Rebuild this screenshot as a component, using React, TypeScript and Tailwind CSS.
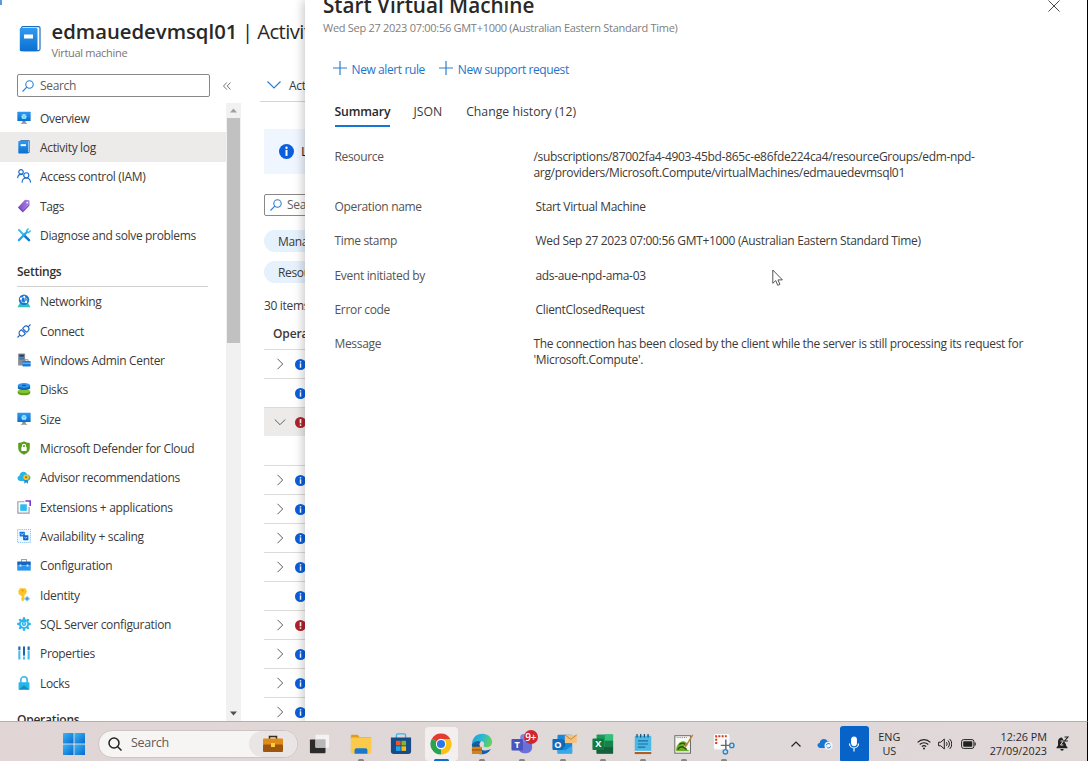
import React from "react";

type IconName =
  | "vm" | "log" | "iam" | "tag" | "tools" | "network" | "plug" | "admin" | "disks" | "shield"
  | "advisor" | "extensions" | "scaling" | "toolbox" | "key" | "gear" | "props" | "lock";

const iconArt: Record<IconName, React.ReactNode> = {
  vm: (
    <>
      <rect x="0.4" y="0.8" width="15.2" height="10.7" rx="0.6" fill="url(#gBlue)" />
      <circle cx="8" cy="6.2" r="2.9" fill="#9fe8fb" />
      <path d="M8 6.200V9M8 6.200 5.700 4.800M8 6.200l2.300-1.400" stroke="#4bb9ee" strokeWidth="0.700" />
      <path d="M6.300 11.500h3.400l.6 2.300H5.700z" fill="#8c9199" />
      <rect x="4.500" y="13.600" width="7" height="1.200" fill="#a5aab0" />
    </>
  ),
  log: (
    <>
      <rect x="3.5" y="0.4" width="11" height="14.400" rx="1" fill="#0f62b0" />
      <rect x="12.800" y="1.400" width="1.100" height="12.600" fill="#d9effc" />
      <rect x="1.500" y="1.100" width="11.300" height="14.200" rx="0.800" fill="url(#gBlue)" />
      <rect x="4.200" y="4.800" width="6" height="2.200" fill="#fff" />
    </>
  ),
  iam: (
    <g fill="none" stroke="#1b68c9" strokeWidth="1.300">
      <circle cx="4.600" cy="3.300" r="2.600" />
      <path d="M0.700 10.400C1 7.600 2.600 6.100 4.600 6.100c.7 0 1.400.2 1.900.6" />
      <circle cx="10.600" cy="7.200" r="2.900" />
      <path d="M5.700 15.600c.2-3.300 2.200-5.300 4.900-5.300s4.700 2 4.900 5.300" />
    </g>
  ),
  tag: (
    <>
      <path d="M9.200.8 14.200 1.300 14.600 6.800 6.600 15.400 1 9.600z" fill="url(#gPurple)" />
      <path d="m3 10.700 4 3.600 6.700-7.200" stroke="#6331b5" strokeWidth="1" fill="none" />
      <circle cx="11.700" cy="4" r="1" fill="#fff" />
    </>
  ),
  tools: (
    <g fill="none" strokeLinecap="round">
      <path d="m2.200 2.200 4.800 4.900" stroke="#35b6e8" strokeWidth="2.200" />
      <path d="m9 9.300 4.700 4.500" stroke="#0f78d4" strokeWidth="3" />
      <path d="m2.200 13.900 9.200-9.300" stroke="#29a5e6" strokeWidth="2.600" />
      <path d="M12.700 1.100 11 3l.3 1.800 1.800.3 1.900-1.700" stroke="#29b5ea" strokeWidth="1.700" />
    </g>
  ),
  network: (
    <>
      <path d="M3 10.500h10l2.400 4.700H.6z" fill="#2fc3c0" />
      <circle cx="8" cy="6.600" r="6" fill="#1b75d1" />
      <path d="M4 5.400 8 3l3.600 2.800-1.600 4-4.400-.4zM8 3l2 6.800" fill="none" stroke="#b5e3fa" strokeWidth="0.900" />
      <circle cx="4.600" cy="5.400" r="1.300" fill="#fff" />
      <circle cx="8.300" cy="3.100" r="1.100" fill="#fff" />
      <circle cx="10.500" cy="9.200" r="1.300" fill="#fff" />
    </>
  ),
  plug: (
    <g transform="rotate(-45 8 8)" fill="none" stroke="#1b68c9" strokeWidth="1.300">
      <path d="M-2.500 8h3.800M14.700 8h3.800M9 6.600H7M9 9.400H7" />
      <path d="M6.900 4.800H4.500A3.100 3.200 0 0 0 4.500 11.200H6.900z" />
      <path d="M9.100 4.800h2.400a3.100 3.200 0 0 1 0 6.400H9.100z" />
    </g>
  ),
  admin: (
    <>
      <rect x="1.300" y="0.500" width="8" height="13.800" rx="0.600" fill="#878d96" />
      <rect x="2.700" y="1.900" width="5.200" height="2.300" fill="#17406e" />
      <rect x="2.700" y="5.200" width="5.200" height="2.200" fill="#3b76ad" />
      <path d="M9 8.900V7.800h3.700v1.100" fill="none" stroke="#777d86" />
      <rect x="6.300" y="9" width="9.300" height="6.300" rx="0.600" fill="#197ddb" />
      <rect x="6.300" y="11.200" width="9.300" height="1" fill="#8ccdf6" />
    </>
  ),
  disks: (
    <>
      <path d="M.8 10.500v1.800c0 3.900 14.400 3.900 14.400 0v-1.800z" fill="#5f9f1c" />
      <ellipse cx="8" cy="10.400" rx="7.200" ry="2.300" fill="#84c333" />
      <path d="M1 4v2.800c0 3.200 14 3.200 14 0V4z" fill="#1467c4" />
      <ellipse cx="8" cy="3.900" rx="7" ry="2.700" fill="#2f96ea" />
      <ellipse cx="8" cy="3.900" rx="2.400" ry="0.800" fill="#0e4c99" />
    </>
  ),
  shield: (
    <>
      <path d="M8 .4c2.100 1.400 4.200 1.900 6.600 1.900V8c0 3.600-2.700 6-6.600 7.700C4.100 14 1.400 11.600 1.400 8V2.300C3.800 2.300 5.900 1.800 8 .4z" fill="#5b9e1b" />
      <path d="M6.300 7V5.500a1.700 1.700 0 0 1 3.400 0V7" fill="none" stroke="#fff" strokeWidth="1.300" />
      <rect x="4.900" y="6.800" width="6.200" height="4.600" rx="0.500" fill="#fff" />
    </>
  ),
  advisor: (
    <>
      <path d="M4 12.500C-.1 12.500-.5 7.500 2.900 6.700 2.900 1.500 10-.1 11.600 5c4.600.3 5.200 6.800.5 7.500z" fill="#28b3e6" />
      <path d="M8.300 9.500h4.200v6.200l-2.100-1.600-2.100 1.600z" fill="#1991d1" />
      <circle cx="10.400" cy="8.300" r="3.200" fill="#f9c51e" />
      <circle cx="10.400" cy="8.300" r="1.200" fill="#8c6b13" />
    </>
  ),
  extensions: (
    <>
      <path d="M8.500 2H1v13h12.800V8" fill="none" stroke="#9aa0a8" strokeWidth="1.400" />
      <rect x="3.700" y="4.900" width="7.500" height="7.500" fill="#28bdf0" />
      <path d="M9.600 1.100h5.500v5.700" fill="none" stroke="#7a35cc" strokeWidth="1.900" />
    </>
  ),
  scaling: (
    <>
      <rect x="0.500" y="0.500" width="15" height="15" fill="#eff8ff" stroke="#6eb5ee" strokeDasharray="1.300 1.100" />
      <rect x="3" y="3" width="6" height="5.600" rx="0.800" fill="#1679dc" />
      <rect x="7" y="7" width="6" height="5.800" rx="0.800" fill="#0e63be" />
      <path d="m4.500 5 1.500 1.800L7.700 5M8.500 9l1.500 1.800L11.700 9" fill="none" stroke="#bfe8ff" strokeWidth="0.900" />
    </>
  ),
  toolbox: (
    <>
      <path d="M5.200 4.300V1.800h5.600v2.500" fill="none" stroke="#9aa0a8" strokeWidth="1.200" />
      <rect x="0.300" y="4" width="15.400" height="4.800" fill="#1266c1" />
      <rect x="0.300" y="8.600" width="15.400" height="5.800" fill="#2a94ec" />
      <rect x="0.300" y="8" width="15.400" height="0.900" fill="#69b9f3" />
      <rect x="3" y="7.400" width="2" height="2.600" fill="#b9e2fb" />
      <rect x="11" y="7.400" width="2" height="2.600" fill="#b9e2fb" />
    </>
  ),
  key: (
    <>
      <path d="M3.200.4h6.400l1.800 3.200-1.500 3.500-1.400.9v5.500l-1.900 1.900-1.600-1.800V11l.9-.8-.9-1.100-2.900-2L1.500 3.700z" fill="#fcc425" />
      <circle cx="6.400" cy="2.900" r="1.200" fill="#e8930c" />
      <path d="m11.500 8.900 3.800 3.400-3.800 3.200-3.500-3.200z" fill="#8fd3f3" />
      <path d="m11.500 10.400 2.100 1.900-2.100 1.900-2-1.900z" fill="#4a9ad2" />
    </>
  ),
  gear: (
    <>
      <path d="M8 .3v15.400M.3 8h15.400M2.600 2.600l10.800 10.800M13.400 2.600 2.600 13.400" stroke="#2eb4ea" strokeWidth="2.700" />
      <circle cx="8" cy="8" r="5.800" fill="#2eb4ea" />
      <path d="M5.700 6a3 3 0 1 0 4.400-.3M8 8.600V6.200" fill="none" stroke="#e9faff" strokeWidth="1.200" />
    </>
  ),
  props: (
    <>
      <path d="M2.700 5V15.500M13.300 5V15.500" stroke="#48bdec" strokeWidth="2.400" />
      <path d="M2.700.5v4M13.300.5v4" stroke="#1f65ab" strokeWidth="2.400" />
      <path d="M8 .5v10.500" stroke="#1f65ab" strokeWidth="2.400" />
      <path d="M8 12V15.500" stroke="#48bdec" strokeWidth="2.400" />
    </>
  ),
  lock: (
    <>
      <path d="M4.400 8V4.500a3.600 3.600 0 0 1 7.200 0V8" fill="none" stroke="#3cb5e0" strokeWidth="1.800" />
      <rect x="1.800" y="7.200" width="12.400" height="8.400" rx="0.800" fill="#24b8ea" />
      <path d="m2 15.500 6-5 6 5z" fill="#168dc4" />
    </>
  ),
};

function Defs() {
  return (
    <svg className="absolute h-0 w-0">
      <defs>
        <linearGradient id="gBlue" x1="0" y1="0" x2="0" y2="1">
          <stop offset="0" stopColor="#2f9af0" />
          <stop offset="1" stopColor="#0b6fd0" />
        </linearGradient>
        <linearGradient id="gPurple" x1="0" y1="0" x2="1" y2="0">
          <stop offset="0" stopColor="#7a45c4" />
          <stop offset="1" stopColor="#b08be6" />
        </linearGradient>
        <linearGradient id="gWin" x1="0" y1="0" x2="1" y2="1">
          <stop offset="0" stopColor="#3bb7f2" />
          <stop offset="1" stopColor="#0569d2" />
        </linearGradient>
        <linearGradient id="gEdge" x1="0" y1="0" x2="1" y2="0.300">
          <stop offset="0" stopColor="#1b9de2" />
          <stop offset="0.600" stopColor="#2dbccb" />
          <stop offset="1" stopColor="#62cf60" />
        </linearGradient>
      </defs>
    </svg>
  );
}

const Icon = ({ name }: { name: IconName }) => (
  <svg viewBox="0 0 16 16" className="h-[14px] w-[14px] shrink-0">{iconArt[name]}</svg>
);

const Magnifier = () => (
  <svg viewBox="0 0 12 12" className="h-[12px] w-[12px] shrink-0" fill="none" stroke="#2b7fd0" strokeWidth="1.100">
    <circle cx="7.500" cy="4.500" r="3.700" />
    <path d="M4.800 7.200.5 11.500" />
  </svg>
);

type NavItem = { icon: IconName; label: string };

const topItems: NavItem[] = [
  { icon: "vm", label: "Overview" },
  { icon: "log", label: "Activity log" },
  { icon: "iam", label: "Access control (IAM)" },
  { icon: "tag", label: "Tags" },
  { icon: "tools", label: "Diagnose and solve problems" },
];

const settingsItems: NavItem[] = [
  { icon: "network", label: "Networking" },
  { icon: "plug", label: "Connect" },
  { icon: "admin", label: "Windows Admin Center" },
  { icon: "disks", label: "Disks" },
  { icon: "vm", label: "Size" },
  { icon: "shield", label: "Microsoft Defender for Cloud" },
  { icon: "advisor", label: "Advisor recommendations" },
  { icon: "extensions", label: "Extensions + applications" },
  { icon: "scaling", label: "Availability + scaling" },
  { icon: "toolbox", label: "Configuration" },
  { icon: "key", label: "Identity" },
  { icon: "gear", label: "SQL Server configuration" },
  { icon: "props", label: "Properties" },
  { icon: "lock", label: "Locks" },
];

function NavRow({ item, active }: { item: NavItem; active?: boolean }) {
  return (
    <li className={`flex h-[29.330px] shrink-0 items-center gap-[9px] pl-[17px] ${active ? "bg-[#edebe9]" : ""}`}>
      <Icon name={item.icon} />
      <span className="pt-[2px]">{item.label}</span>
    </li>
  );
}

function Sidebar() {
  return (
    <div className="flex w-[241px] shrink-0 flex-col">
      <div className="flex h-[30px] shrink-0 items-start pl-[17px]">
        <div className="mt-[1px] flex h-[23px] w-[193px] items-center gap-[6px] rounded-[2px] border border-[#8a8886] pl-[4px] text-[#605e5c]">
          <Magnifier />
          <span className="pt-[1px]">Search</span>
        </div>
        <svg viewBox="0 0 8 8" className="ml-[13px] mt-[9px] h-[8px] w-[8px]" fill="none" stroke="#666" strokeWidth="0.900">
          <path d="M3.800.5.5 4l3.300 3.500M7.500.5 4.200 4l3.300 3.500" />
        </svg>
      </div>
      <div className="flex min-h-0 flex-1">
        <nav className="flex w-[226px] flex-col overflow-hidden">
          <ul>
            {topItems.map((it, i) => <NavRow key={it.label} item={it} active={i === 1} />)}
          </ul>
          <h2 className="ml-[17px] mr-[18px] flex h-[37px] shrink-0 items-center border-b border-[#d2d0ce] pt-[9px] font-semibold tracking-[-0.250px] text-[#323130]">Settings</h2>
          <ul>
            {settingsItems.map((it) => <NavRow key={it.label} item={it} />)}
          </ul>
          <h2 className="ml-[17px] h-[37px] shrink-0 pt-[14px] font-semibold leading-[17px] tracking-[-0.250px] text-[#323130]">Operations</h2>
        </nav>
        <div className="flex w-[15px] flex-col items-center bg-[#f1f1f1]">
          <svg viewBox="0 0 15 15" className="h-[15px] w-[15px] shrink-0"><path d="M4 9.500h7L7.500 5.500z" fill="#a0a0a0" /></svg>
          <div className="h-[225px] w-[13px] bg-[#c1c1c1]" />
          <svg viewBox="0 0 15 15" className="mt-auto h-[15px] w-[15px] shrink-0"><path d="M4 5.500h7L7.500 9.500z" fill="#505050" /></svg>
        </div>
      </div>
    </div>
  );
}

function Status({ kind, className }: { kind: "info" | "error"; className: string }) {
  return (
    <svg viewBox="0 0 12 12" className={`shrink-0 ${className}`}>
      <circle cx="6" cy="6" r="6" fill={kind === "info" ? "#0a5fdc" : "#b0232b"} />
      {kind === "info" ? (
        <>
          <circle cx="6" cy="3" r="0.950" fill="#fff" />
          <rect x="5.200" y="4.700" width="1.600" height="4.800" fill="#fff" />
        </>
      ) : (
        <>
          <rect x="5.100" y="2.300" width="1.800" height="4.600" fill="#fff" />
          <circle cx="6" cy="8.800" r="1" fill="#fff" />
        </>
      )}
    </svg>
  );
}

type EventRow = { chevron?: "right" | "down"; status?: "info" | "error" };

const events: EventRow[] = [
  { chevron: "right", status: "info" },
  { status: "info" },
  { chevron: "down", status: "error" },
  {},
  { chevron: "right", status: "info" },
  { chevron: "right", status: "info" },
  { chevron: "right", status: "info" },
  { chevron: "right", status: "info" },
  { status: "info" },
  { chevron: "right", status: "error" },
  { chevron: "right", status: "info" },
  { chevron: "right", status: "info" },
  { chevron: "right", status: "info" },
];

function LogColumn() {
  return (
    <div className="flex w-[64px] flex-col overflow-hidden whitespace-nowrap pl-[19px]">
      <div className="flex h-[29px] shrink-0 items-center gap-[8px] border-b border-[#d6d4d2] pb-[4px] pl-[7px]">
        <svg viewBox="0 0 14 8" className="h-[8px] w-[14px] shrink-0" fill="none" stroke="#2b7fd0" strokeWidth="1.200"><path d="m.5.500 6.500 6.500L13.500.5" /></svg>
        <span className="pt-[1px]">Activity</span>
      </div>
      <div className="flex flex-col pl-[4px]">
        <div className="mt-[27px] flex h-[45px] items-center gap-[7px] bg-[#f0f6ff] pl-[15px]">
          <Status kind="info" className="h-[15px] w-[15px]" />
          <span className="pt-[1px] text-[13px] text-[#201f1e]">Looking</span>
        </div>
        <div className="mt-[20px] flex h-[22px] w-[200px] items-center gap-[5px] rounded-[2px] border border-[#8a8886] pl-[5px] text-[#605e5c]">
          <Magnifier />
          <span>Search</span>
        </div>
        <div className="mt-[14px] flex h-[22px] w-[200px] items-center rounded-full bg-[#e5f1fc] pl-[14px] pt-px">Management</div>
        <div className="mt-[9px] flex h-[22px] w-[200px] items-center rounded-full bg-[#e5f1fc] pl-[14px] pt-px">Resource</div>
        <div className="mt-[14px] h-[18px] leading-[18px]">30 items</div>
        <div className="mt-[10px] h-[24px] pl-[9px] font-semibold leading-[18px] tracking-[-0.100px]">Operation name</div>
        {events.map((e, i) => (
          <div
            key={i}
            className={`flex h-[29px] w-[200px] shrink-0 items-center pb-px pl-[10px] ${i === 3 ? "" : "border-t border-[#dddbd9]"} ${e.chevron === "down" ? "bg-[#edebe9]" : ""}`}
          >
            <div className="flex w-[21px]">
              {e.chevron && (
                <svg viewBox="0 0 12 12" className={`h-[12px] w-[12px] ${e.chevron === "down" ? "rotate-90" : ""}`} fill="none" stroke="#605e5c" strokeWidth="1">
                  <path d="m3.500.8 5.200 5.200-5.200 5.200" />
                </svg>
              )}
            </div>
            {e.status && <Status kind={e.status} className="mt-[2px] h-[11px] w-[11px]" />}
          </div>
        ))}
      </div>
    </div>
  );
}

type Detail = { label: string; lines: string[]; wide?: boolean };

const details: Detail[] = [
  {
    label: "Resource",
    wide: true,
    lines: [
      "/subscriptions/87002fa4-4903-45bd-865c-e86fde224ca4/resourceGroups/edm-npd-",
      "arg/providers/Microsoft.Compute/virtualMachines/edmauedevmsql01",
    ],
  },
  { label: "Operation name", lines: ["Start Virtual Machine"] },
  { label: "Time stamp", lines: ["Wed Sep 27 2023 07:00:56 GMT+1000 (Australian Eastern Standard Time)"] },
  { label: "Event initiated by", lines: ["ads-aue-npd-ama-03"] },
  { label: "Error code", lines: ["ClientClosedRequest"] },
  {
    label: "Message",
    wide: true,
    lines: ["The connection has been closed by the client while the server is still processing its request for", "'Microsoft.Compute'."],
  },
];

const Plus = () => (
  <svg viewBox="0 0 14 14" className="mt-[-2px] h-[14px] w-[14px] shrink-0" stroke="#2b7fd0" strokeWidth="1.200"><path d="M7 0v14M0 7h14" /></svg>
);

function Blade() {
  return (
    <section className="relative z-10 flex min-w-0 flex-1 flex-col whitespace-nowrap border-r border-black bg-white shadow-[-2px_0_9px_rgba(0,0,0,0.220)]">
      <div className="flex h-[56px] shrink-0 justify-between overflow-hidden pl-[18px] pr-[27px]">
        <div>
          <h1 className="-mt-[8px] h-[27px] text-[20.700px] font-semibold leading-[27px] tracking-normal text-[#292827]">Start Virtual Machine</h1>
          <p className="text-[11px] leading-[17px] tracking-[-0.280px] text-[#807e7c]">Wed Sep 27 2023 07:00:56 GMT+1000 (Australian Eastern Standard Time)</p>
        </div>
        <svg viewBox="0 0 12 12" className="h-[12px] w-[12px]" stroke="#484644" strokeWidth="1"><path d="m.5.500 11 11M11.500.5l-11 11" /></svg>
      </div>
      <div className="flex h-[26px] shrink-0 items-center gap-[14px] pl-[27.500px] tracking-[-0.400px] text-[#1f74c9]">
        <button className="flex items-center gap-[5px]"><Plus /><span className="pt-[2px]">New alert rule</span></button>
        <button className="flex items-center gap-[5px]"><Plus /><span className="pt-[2px]">New support request</span></button>
      </div>
      <div className="mt-[16px] flex h-[29px] shrink-0 gap-[22px] pl-[29.500px] text-[12.250px] leading-[28px] tracking-normal">
        <div className="mr-[1px] h-[29px] border-b-2 border-[#1477d4] font-semibold tracking-[-0.140px] text-[#292827]">Summary</div>
        <div className="mr-[2px]">JSON</div>
        <div>Change history (12)</div>
      </div>
      <dl className="mt-[22px] flex flex-col gap-[18.200px] pl-[29.500px] leading-[16px]">
        {details.map((d) => (
          <div key={d.label} className="flex">
            <dt className="w-[199px] shrink-0 text-[#555351]">{d.label}</dt>
            <dd className={d.wide ? "" : "pl-[2px]"}>
              {d.lines.map((l) => <div key={l}>{l}</div>)}
            </dd>
          </div>
        ))}
      </dl>
      <svg viewBox="0 0 13 18" className="absolute left-[467px] top-[269px] h-[18px] w-[13px]">
        <path d="M.8 1v13.300l3-2.700 1.900 4.700 2.200-.9-1.900-4.500h4.400z" fill="#fff" stroke="#444" strokeWidth="0.900" />
      </svg>
    </section>
  );
}

const taskArt: { name: string; art: React.ReactNode; state: "none" | "open" | "active" }[] = [
  {
    name: "Task view",
    state: "none",
    art: (
      <>
        <rect x="1" y="7" width="17" height="15" rx="1" fill="#2c2b2b" />
        <rect x="7" y="2" width="15" height="14" rx="1" fill="#f8f7f7" opacity="0.850" />
        <rect x="7" y="7" width="11" height="9" fill="#b9b7b7" />
      </>
    ),
  },
  {
    name: "File Explorer",
    state: "open",
    art: (
      <>
        <path d="M1 3.500c0-1 .5-1.500 1.500-1.500h6l2 2.500H22c1 0 1 .5 1 1V21H1z" fill="#e09c1a" />
        <rect x="1" y="5" width="22" height="17.500" rx="1.200" fill="#fcca4a" />
        <path d="M5 22.500v-4a2 2 0 0 1 2-2h10a2 2 0 0 1 2 2v4z" fill="#1a78cc" />
      </>
    ),
  },
  {
    name: "Store",
    state: "none",
    art: (
      <>
        <path d="M7 6V2.500c0-1 .5-1.500 1.500-1.500h7c1 0 1.500.5 1.500 1.500V6" fill="none" stroke="#38b3e8" strokeWidth="1.500" />
        <path d="M1 5h22v15a3 3 0 0 1-3 3H4a3 3 0 0 1-3-3z" fill="#164c89" />
        <rect x="6.500" y="8.500" width="5" height="5" fill="#f15423" />
        <rect x="12.500" y="8.500" width="5" height="5" fill="#7fba24" />
        <rect x="6.500" y="14.500" width="5" height="5" fill="#21a6ed" />
        <rect x="12.500" y="14.500" width="5" height="5" fill="#fdb913" />
      </>
    ),
  },
  {
    name: "Chrome",
    state: "active",
    art: (
      <>
        <path d="M12 12 2.040 6.250A11.500 11.500 0 0 1 21.960 6.250z" fill="#e33b2e" />
        <path d="M12 12 21.960 6.250A11.500 11.500 0 0 1 12 23.500z" fill="#fbc116" />
        <path d="M12 12v11.500A11.500 11.500 0 0 1 2.040 6.250z" fill="#2ba24c" />
        <path d="M12 6.500h9.960L17 14.800z" fill="#fbc116" />
        <path d="m7.200 14.800-5.160-8.550L7 14z" fill="#2ba24c" />
        <circle cx="12" cy="12" r="5.600" fill="#fff" />
        <circle cx="12" cy="12" r="4.400" fill="#2b77e8" />
      </>
    ),
  },
  {
    name: "Edge",
    state: "open",
    art: (
      <>
        <path d="M1 12C1.500 5 6 .7 12.300.7 18.800.7 23 5 23 9.700c0 4-3 5.800-6 5.800-2.500 0-3.600-1-3-2.200 1.200-2.500-.5-4.300-3-4.300C6.500 9 2 11 1 15z" fill="url(#gEdge)" />
        <path d="M1 12.500C4 8 9 8.500 11 9.200 7.500 12 9 18.500 14 19c3 .4 5.500-.3 7.600-1.500C19.500 21.500 16 23.300 12 23.300 6 23.300.7 18.500 1 12.500z" fill="#155fa9" />
        <rect x="1" y="15" width="11" height="8" rx="1" fill="#d38320" />
        <path d="M4 15v-1.500h5V15" fill="none" stroke="#5e3a12" strokeWidth="1" />
        <rect x="1" y="18" width="11" height="1" fill="#8a4d12" />
      </>
    ),
  },
  {
    name: "Teams",
    state: "open",
    art: (
      <>
        <circle cx="14" cy="5" r="4" fill="#7b83eb" />
        <path d="M8 9h15v7a6 6 0 0 1-6 6h-3a6 6 0 0 1-6-6z" fill="#6a70d8" />
        <rect x="0.500" y="6.500" width="12.500" height="12.500" rx="1" fill="#4b53bc" />
        <text x="6.800" y="16.200" textAnchor="middle" fontSize="10" fontWeight="700" fill="#fff">T</text>
      </>
    ),
  },
  {
    name: "Outlook",
    state: "open",
    art: (
      <>
        <rect x="6" y="2" width="16" height="20" rx="1" fill="#1788d8" />
        <rect x="6" y="8" width="8" height="7" fill="#0f5ba8" />
        <path d="M6 14l8 5 8-5v8.500H6z" fill="#36a9ea" />
        <rect x="0.500" y="6.500" width="12" height="12" rx="1" fill="#0f6cbd" />
        <text x="6.500" y="16" textAnchor="middle" fontSize="10" fontWeight="700" fill="#fff">O</text>
        <path d="M14 2h13v9H14z" fill="#f5c27d" />
        <path d="m14 2 6.500 5L27 2" fill="none" stroke="#b87a34" strokeWidth="0.900" />
      </>
    ),
  },
  {
    name: "Excel",
    state: "open",
    art: (
      <>
        <rect x="5" y="1.500" width="18" height="21" rx="1" fill="#1c9a5a" />
        <rect x="14" y="1.500" width="9" height="7" fill="#35bf7c" />
        <rect x="5" y="15" width="18" height="7.500" fill="#155f3b" />
        <rect x="14" y="8.500" width="9" height="7" fill="#17834b" />
        <rect x="0.500" y="6" width="12.500" height="12.500" rx="1" fill="#117a43" />
        <text x="6.800" y="15.800" textAnchor="middle" fontSize="10" fontWeight="700" fill="#fff">X</text>
      </>
    ),
  },
  {
    name: "Notepad",
    state: "open",
    art: (
      <>
        <rect x="3" y="3" width="18" height="18" rx="1" fill="#4bb9e6" />
        <path d="M5.500 1v4M9.500 1v4M13.500 1v4M17.500 1v4" stroke="#134a6b" strokeWidth="1.300" />
        <path d="M6.500 8.500h11M6.500 12h11M6.500 15.500h8" stroke="#1b6c9c" strokeWidth="1.300" />
        <rect x="3" y="20.500" width="18" height="2.500" fill="#b05d1f" />
        <rect x="3" y="19.500" width="18" height="1" fill="#fff" />
      </>
    ),
  },
  {
    name: "Notepad++",
    state: "open",
    art: (
      <>
        <rect x="2" y="3" width="17" height="19" fill="#fbfbf6" stroke="#5b5b5b" strokeWidth="1" />
        <path d="M4 5h12" stroke="#6d6d6d" strokeDasharray="1 1" />
        <path d="M3.500 20c-.5-5 2-10 7-11 4 0 6 3 5 5-2 .5-3 .5-4 0 1 2 2 4 6 5v1z" fill="#6aac23" />
        <path d="M5 18c3-4 6-4 10 0M7 12.500c2-2 5-2 6 0" fill="none" stroke="#2c4d12" strokeWidth="1.500" />
        <path d="m13 16 8.500-14" stroke="#c28434" strokeWidth="1.600" />
      </>
    ),
  },
  {
    name: "Snipping Tool",
    state: "open",
    art: (
      <>
        <rect x="1" y="1" width="17" height="17" rx="2" fill="#fbfbfb" />
        <path d="M3.500 12V3.500H15" fill="none" stroke="#d23c22" strokeWidth="2.200" strokeDasharray="2.200 1.400" />
        <path d="M8.500 13.500H18M14 7v11" stroke="#636870" strokeWidth="1.600" />
        <circle cx="20.500" cy="13.500" r="2.400" fill="none" stroke="#2385d0" strokeWidth="1.500" />
        <circle cx="13.500" cy="20.500" r="2.400" fill="none" stroke="#2385d0" strokeWidth="1.500" />
      </>
    ),
  },
];

function Taskbar() {
  return (
    <footer className="relative z-20 flex h-[40px] shrink-0 items-center whitespace-nowrap border-r border-t border-r-black border-t-[#b4aead] bg-gradient-to-r from-[#e1d5d5] via-[#dfd9d8] to-[#e1d8d8] pt-[4px] tracking-normal text-[#2b2929]">
      <svg viewBox="0 0 22 22" className="ml-[63px] h-[22px] w-[22px] shrink-0" fill="url(#gWin)">
        <rect width="10.500" height="10.500" rx="0.600" /><rect x="11.500" width="10.500" height="10.500" rx="0.600" />
        <rect y="11.500" width="10.500" height="10.500" rx="0.600" /><rect x="11.500" y="11.500" width="10.500" height="10.500" rx="0.600" />
      </svg>
      <div className="ml-[13px] flex h-[28px] w-[200px] shrink-0 items-center rounded-full border border-[#cbc5c5] bg-[#f7f4f4]">
        <svg viewBox="0 0 14 14" className="ml-[9px] h-[14px] w-[14px]" fill="none" stroke="#222" strokeWidth="1.500"><circle cx="6" cy="6" r="5" /><path d="m9.700 9.700 3.800 3.800" /></svg>
        <span className="ml-[9px] text-[12.500px] tracking-[-0.300px] text-[#5d5a5a]">Search</span>
        <div className="ml-auto flex h-[26px] w-[48px] items-center justify-center rounded-full bg-[#e9e5e5]">
          <svg viewBox="0 0 22 18" className="h-[18px] w-[22px]">
            <path d="M7.500 4V1.500h7V4" fill="none" stroke="#3a2b1f" strokeWidth="1.500" />
            <rect x="1" y="3.500" width="20" height="7" rx="1" fill="#e08b17" />
            <rect x="1" y="9.500" width="20" height="7.500" rx="1" fill="#9e560e" />
            <rect x="9" y="8" width="4" height="4" fill="#fccd3f" />
          </svg>
        </div>
      </div>
      <div className="ml-[2px] flex shrink-0">
        {taskArt.map((t) => (
          <div key={t.name} className="flex w-[40.400px] justify-center">
            <div className={`relative flex h-[34px] w-[33px] items-center justify-center rounded-[4px] ${t.state === "active" ? "bg-[#f3efef]" : ""}`}>
              <svg viewBox="0 0 24 24" className="h-[22px] w-[22px] overflow-visible" role="img" aria-label={t.name}>{t.art}</svg>
              {t.name === "Teams" && (
                <span className="absolute left-[18px] top-[3px] flex h-[14px] w-[14px] items-center justify-center rounded-full bg-[#d0252f] text-[10px] font-semibold leading-none tracking-[-0.300px] text-white">9+</span>
              )}
              {t.state !== "none" && (
                <span className={`absolute bottom-[-1px] h-[3px] rounded-full ${t.state === "active" ? "w-[15px] bg-[#0f6cd0]" : "w-[6px] bg-[#8a8585]"}`} />
              )}
            </div>
          </div>
        ))}
      </div>
      <svg viewBox="0 0 10 6" className="ml-[47px] h-[6px] w-[10px] shrink-0" fill="none" stroke="#222" strokeWidth="1.200"><path d="M.5 5.500 5 1l4.500 4.500" /></svg>
      <svg viewBox="0 0 16 13" className="ml-[16px] h-[13px] w-[16px] shrink-0">
        <path d="M3.500 11C0 11-.6 6.600 2.600 6 3 1.500 9 .4 10.600 4.500c4 0 4.600 5 2.400 6.500z" fill="#1975d3" />
        <circle cx="11.500" cy="8.700" r="4" fill="#f4f7fa" />
        <path d="M9.300 8.300a2.200 2.200 0 0 1 4-.8M13.700 9.200a2.200 2.200 0 0 1-4 .8" fill="none" stroke="#2b86d8" strokeWidth="1" />
      </svg>
      <div className="ml-[6.500px] flex h-[36px] w-[29px] shrink-0 items-center justify-center rounded-[3px] bg-[#0763c8]">
        <svg viewBox="0 0 12 16" className="h-[16px] w-[12px]" fill="none" stroke="#fff" strokeWidth="1.200">
          <rect x="3.700" y="1" width="4.600" height="8.600" rx="2.300" fill="#fff" />
          <path d="M1.500 7.500a4.500 4.500 0 0 0 9 0M6 12v3.500" />
        </svg>
      </div>
      <div className="ml-[5.500px] w-[30px] shrink-0 text-center text-[10.800px] leading-[14px]">ENG<br />US</div>
      <svg viewBox="0 0 14 12" className="ml-[13px] h-[12px] w-[14px] shrink-0" fill="none" stroke="#222" strokeWidth="1.100">
        <path d="M.6 4.300a9 9 0 0 1 12.800 0M2.700 6.500a6 6 0 0 1 8.600 0M4.800 8.600a3.200 3.200 0 0 1 4.400 0" /><circle cx="7" cy="10.500" r="1" fill="#222" stroke="none" />
      </svg>
      <svg viewBox="0 0 14 12" className="ml-[7px] h-[12px] w-[14px] shrink-0" fill="none" stroke="#222" strokeWidth="1">
        <path d="M.6 4.200h2.200L6.300 1v10L2.800 7.800H.6zM8.300 4.200a2.500 2.500 0 0 1 0 3.600M10 2.500a5 5 0 0 1 0 7M11.700 1a7 7 0 0 1 0 10" />
      </svg>
      <svg viewBox="0 0 15 10" className="ml-[9px] h-[10px] w-[15px] shrink-0">
        <rect x="0.600" y="0.600" width="12.300" height="8.800" rx="2" fill="none" stroke="#222" strokeWidth="1" /><rect x="2.200" y="2.200" width="9.100" height="5.600" rx="0.700" fill="#222" /><path d="M14.100 3.500v3" stroke="#222" strokeWidth="1.200" />
      </svg>
      <div className="ml-auto mr-[9px] text-right text-[10.800px] leading-[14px]">12:26 PM<br />27/09/2023</div>
      <svg viewBox="0 0 13 15" className="mr-[18px] h-[15px] w-[13px] shrink-0">
        <path d="M6 1.500C3.400 1.500 2 3.300 2 5.500v4L.5 11.500v.7h11v-.7L10 9.500v-1zM4.300 13h3.400a1.700 1.700 0 0 1-3.400 0z" fill="#222" />
        <path d="M4.500 5h2.800L4.500 9h2.800" fill="none" stroke="#e1d8d8" strokeWidth="1" />
        <path d="M8.500 1h3.500L8.500 5H12" fill="none" stroke="#222" strokeWidth="1.100" />
      </svg>
    </footer>
  );
}

export default function App() {
  return (
    <div className="flex h-[761px] w-[1088px] flex-col overflow-hidden bg-white font-['Open_Sans',sans-serif] text-[12px] tracking-[-0.330px] text-[#3b3a39]">
      <Defs />
      <main className="flex min-h-0 flex-1">
        <div className="flex w-[305px] shrink-0 flex-col">
          <header className="flex h-[73px] shrink-0 overflow-hidden whitespace-nowrap">
            <div className="h-[5px] w-[2px] shrink-0 bg-[#5b9bd8]" />
            <svg viewBox="0 0 22 26" className="ml-[17px] mt-[26px] h-[26px] w-[22px] shrink-0">
              <rect x="2.500" y="0.600" width="18.500" height="24" rx="1.500" fill="#fff" stroke="#1a6fbd" strokeWidth="1.200" />
              <rect x="0.800" y="2" width="17.700" height="23.300" rx="1.200" fill="url(#gBlue)" />
              <rect x="5" y="8.500" width="9" height="4" fill="#fff" />
            </svg>
            <div className="ml-[10.500px] pt-[16px]">
              <h1 className="text-[20.300px] leading-[30px] tracking-normal text-[#292827]"><span className="font-semibold">edmauedevmsql01</span><span className="tracking-[-0.600px]"> | Activity log</span></h1>
              <p className="text-[11px] leading-[14px] tracking-[-0.300px] text-[#777573]">Virtual machine</p>
            </div>
          </header>
          <div className="flex min-h-0 flex-1">
            <Sidebar />
            <LogColumn />
          </div>
        </div>
        <Blade />
      </main>
      <Taskbar />
    </div>
  );
}
